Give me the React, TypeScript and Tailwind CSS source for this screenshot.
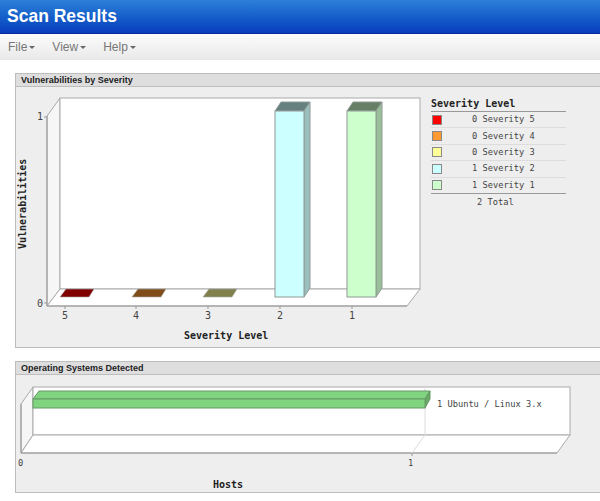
const mono = "font-['DejaVu_Sans_Mono',monospace]";

function Menu({ label }: { label: string }) {
  return (
    <div className="flex items-center gap-[2px] text-[12px] text-[#777]">
      <span>{label}</span>
      <span className="mt-[1px] border-x-[3px] border-t-[3px] border-x-transparent border-t-[#666]" />
    </div>
  );
}

function Panel({
  title,
  className,
  children,
}: {
  title: string;
  className: string;
  children: React.ReactNode;
}) {
  return (
    <section className={`ml-[15px] w-[600px] shrink-0 border border-[#bdbdbd] bg-[#eeeeee] ${className}`}>
      <h2 className="h-[13px] border-b border-[#bdbdbd] bg-[#dedede] pl-[5px] text-[9px] font-bold leading-[12px] text-[#222]">
        {title}
      </h2>
      {children}
    </section>
  );
}

const legend = [
  { count: 0, level: 5, color: "bg-[#ff0000]" },
  { count: 0, level: 4, color: "bg-[#ff9933]" },
  { count: 0, level: 3, color: "bg-[#ffff99]" },
  { count: 1, level: 2, color: "bg-[#ccffff]" },
  { count: 1, level: 1, color: "bg-[#ccffcc]" },
];

function Legend() {
  return (
    <div className={`ml-[10px] mt-[10px] w-[135px] text-[8.7px] text-[#444] ${mono}`}>
      <div className="h-[15px] border-b border-[#999] text-[10px] font-bold leading-[14px] text-[#222]">
        Severity Level
      </div>
      {legend.map((row, i) => (
        <div
          key={row.level}
          className={`flex h-[16.4px] items-center border-b ${i === 4 ? "border-[#999]" : "border-[#dddddd]"}`}
        >
          <span className={`ml-[1px] h-[10px] w-[10px] border border-[#888] ${row.color}`} />
          <span className="ml-[30px]">
            {row.count} Severity {row.level}
          </span>
        </div>
      ))}
      <div className="pl-[46px] pt-[2px]">2 Total</div>
    </div>
  );
}

function Bar3d({ x, front, side, top }: { x: number; front: string; side: string; top: string }) {
  return (
    <g stroke="#8f9a96" strokeWidth="1">
      <polygon points={`${x},112 ${x + 6},103 ${x + 35},103 ${x + 29},112`} fill={top} />
      <polygon points={`${x + 29},112 ${x + 35},103 ${x + 35},289 ${x + 29},298`} fill={side} />
      <rect x={x} y="112" width="29" height="186" fill={front} />
    </g>
  );
}

function FlatBar({ x, fill }: { x: number; fill: string }) {
  return <polygon points={`${x},298 ${x + 6},290 ${x + 34},290 ${x + 29},298`} fill={fill} stroke="#aaa" strokeWidth="0.6" />;
}

function SeverityChart() {
  const ticks = [
    { x: 65, label: "5" },
    { x: 136, label: "4" },
    { x: 208, label: "3" },
    { x: 280, label: "2" },
    { x: 352, label: "1" },
  ];
  return (
    <svg width="405" height="259" viewBox="16 88 405 259" className="shrink-0">
      <polygon points="47,117 60,99 60,290 47,307" fill="#f6f6f6" stroke="#aaa" />
      <rect x="60" y="99" width="360" height="191" fill="#fff" stroke="#aaa" />
      <polygon points="47,307 60,290 420,290 407,307" fill="#fff" stroke="#aaa" />
      <line x1="47" y1="117" x2="47" y2="307" stroke="#999" />
      <line x1="47" y1="307" x2="407" y2="307" stroke="#999" />
      <path d="M44 118h3M44 304h3" stroke="#999" />
      {ticks.map((t) => (
        <line key={t.x} x1={t.x} y1="307" x2={t.x} y2="310" stroke="#999" />
      ))}

      <FlatBar x={60} fill="#800000" />
      <FlatBar x={132} fill="#804d1a" />
      <FlatBar x={203} fill="#80804d" />
      <Bar3d x={275} front="#ccffff" side="#99bfbf" top="#668080" />
      <Bar3d x={347} front="#ccffcc" side="#99bf99" top="#668066" />

      <g className={mono} fontSize="10" fill="#444">
        <text x="37" y="121">1</text>
        <text x="37" y="308">0</text>
        {ticks.map((t) => (
          <text key={t.x} x={t.x - 3} y="320">{t.label}</text>
        ))}
      </g>
      <g className={mono} fontSize="10" fontWeight="700" fill="#222">
        <text x="184" y="340">Severity Level</text>
        <text transform="translate(26 250) rotate(-90)">Vulnerabilities</text>
      </g>
    </svg>
  );
}

function OsChart() {
  return (
    <svg width="570" height="118" viewBox="16 375 570 118" className="shrink-0">
      <polygon points="21,404 33,387 33,435 21,453" fill="#f6f6f6" stroke="#aaa" />
      <rect x="33" y="387" width="537" height="48" fill="#fff" stroke="#aaa" />
      <polygon points="21,453 33,435 570,435 557,453" fill="#fff" stroke="#aaa" />
      <line x1="21" y1="404" x2="21" y2="453" stroke="#999" />
      <line x1="21" y1="453" x2="557" y2="453" stroke="#999" />
      <polyline points="425,387 425,435 412,453" fill="none" stroke="#dddddd" />
      <line x1="412" y1="453" x2="412" y2="456" stroke="#999" />

      <g stroke="#669966" fill="#80d480">
        <polygon points="33,399 39,391 430,391 425,399" />
        <polygon points="425,399 430,391 430,399 425,408" fill="#66aa66" />
        <rect x="33" y="399" width="392" height="9" />
      </g>

      <g className={mono} fontSize="8.7" fill="#444">
        <text x="437" y="407">1 Ubuntu / Linux 3.x</text>
        <text x="18" y="466">0</text>
        <text x="408" y="466">1</text>
      </g>
      <text x="213" y="488" className={mono} fontSize="10" fontWeight="700" fill="#222">Hosts</text>
    </svg>
  );
}

export default function App() {
  return (
    <div className="flex h-[501px] w-[600px] flex-col overflow-hidden bg-white font-['Liberation_Sans',Arial,sans-serif]">
      <header className="flex h-[34px] shrink-0 items-center border-b border-[#0a2a9c] bg-gradient-to-b from-[#2c80d8] to-[#0a3cbc] pl-[7px]">
        <h1 className="text-[17.5px] font-bold text-white">Scan Results</h1>
      </header>
      <nav className="flex h-[26px] shrink-0 items-center gap-[17px] bg-gradient-to-b from-[#fbfbfb] to-[#e9e9e9] pl-[8px]">
        <Menu label="File" />
        <Menu label="View" />
        <Menu label="Help" />
      </nav>

      <main className="w-[600px] pt-[13px]">
        <Panel title="Vulnerabilities by Severity" className="h-[275px]">
          <div className="flex">
            <SeverityChart />
            <Legend />
          </div>
        </Panel>
        <Panel title="Operating Systems Detected" className="mt-[13px] h-[132px]">
          <OsChart />
        </Panel>
      </main>
    </div>
  );
}
